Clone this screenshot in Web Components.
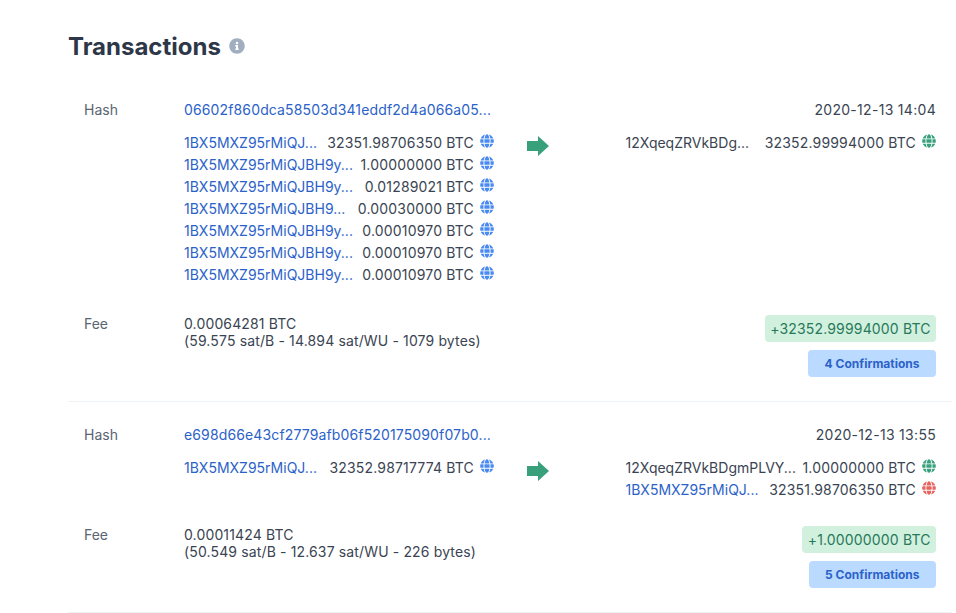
<!DOCTYPE html>
<html>
<head>
<meta charset="utf-8">
<title>Transactions</title>
<style>
  html, body { margin: 0; background: #fff; }
  body { font-family: Inter, "Liberation Sans", sans-serif; font-size: 14px; color: #3a4452; overflow: hidden; }
</style>
</head>
<body>
<tx-page>
  <tx-card style="--io-gap: 11px; --fee-gap: 29.4px">
    <a slot="hash">06602f860dca58503d341eddf2d4a066a05...</a>
    <span slot="time">2020-12-13 14:04</span>
    <io-line slot="in" addr="1BX5MXZ95rMiQJ..." amount="32351.98706350 BTC" link></io-line>
    <io-line slot="in" addr="1BX5MXZ95rMiQJBH9y..." amount="1.00000000 BTC" link></io-line>
    <io-line slot="in" addr="1BX5MXZ95rMiQJBH9y..." amount="0.01289021 BTC" link></io-line>
    <io-line slot="in" addr="1BX5MXZ95rMiQJBH9..." amount="0.00030000 BTC" link></io-line>
    <io-line slot="in" addr="1BX5MXZ95rMiQJBH9y..." amount="0.00010970 BTC" link></io-line>
    <io-line slot="in" addr="1BX5MXZ95rMiQJBH9y..." amount="0.00010970 BTC" link></io-line>
    <io-line slot="in" addr="1BX5MXZ95rMiQJBH9y..." amount="0.00010970 BTC" link></io-line>
    <io-line slot="out" addr="12XqeqZRVkBDg..." amount="32352.99994000 BTC" color="green"></io-line>
    <span slot="fee">0.00064281 BTC<br>(59.575 sat/B - 14.894 sat/WU - 1079 bytes)</span>
    <tx-badge slot="badge" kind="green">+32352.99994000 BTC</tx-badge>
    <tx-badge slot="badge" kind="blue">4 Confirmations</tx-badge>
  </tx-card>
  <tx-card style="--io-gap: 11px; --fee-gap: 24.4px">
    <a slot="hash">e698d66e43cf2779afb06f520175090f07b0...</a>
    <span slot="time">2020-12-13 13:55</span>
    <io-line slot="in" addr="1BX5MXZ95rMiQJ..." amount="32352.98717774 BTC" link></io-line>
    <io-line slot="out" addr="12XqeqZRVkBDgmPLVY..." amount="1.00000000 BTC" color="green"></io-line>
    <io-line slot="out" addr="1BX5MXZ95rMiQJ..." amount="32351.98706350 BTC" color="red" link></io-line>
    <span slot="fee">0.00011424 BTC<br>(50.549 sat/B - 12.637 sat/WU - 226 bytes)</span>
    <tx-badge slot="badge" kind="green">+1.00000000 BTC</tx-badge>
    <tx-badge slot="badge" kind="blue">5 Confirmations</tx-badge>
  </tx-card>
</tx-page>

<template id="tx-page-template">
  <style>
    :host { display: block; padding: 30px 4px 0 68px; }
    h1 { display: flex; align-items: center; gap: 8px; margin: 0 0 13px; font-size: 24px; line-height: 34px; font-weight: 700; color: #2d3748; }
    svg { width: 16px; height: 16px; margin-top: -2px; fill: #a0aec0; }
  </style>
  <h1>Transactions
    <svg viewBox="0 0 512 512"><path d="M256 8C119 8 8 119.1 8 256c0 137 111 248 248 248s248-111 248-248C504 119.1 393 8 256 8zm0 110c23.2 0 42 18.8 42 42s-18.8 42-42 42-42-18.8-42-42 18.8-42 42-42zm56 254c0 6.6-5.4 12-12 12h-88c-6.6 0-12-5.4-12-12v-24c0-6.6 5.4-12 12-12h12v-64h-12c-6.6 0-12-5.4-12-12v-24c0-6.6 5.4-12 12-12h64c6.6 0 12 5.4 12 12v100h12c6.6 0 12 5.4 12 12v24z"/></svg>
  </h1>
  <slot></slot>
</template>

<template id="tx-card-template">
  <style>
    :host { display: block; padding: 22px 16px 24px; border-bottom: 1px solid #edf2f7; }
    .head, .body, .foot { display: flex; }
    .head { line-height: 22px; }
    .label { width: 100px; flex: none; color: #5a6472; }
    .main { width: 310px; flex: none; }
    ::slotted(a) { color: #2b62c9; letter-spacing: .135px; }
    .time { margin-left: auto; letter-spacing: .3px; }
    .body { margin-top: var(--io-gap); }
    .body .spacer { width: 100px; flex: none; }
    .arrow { width: 22px; height: 20px; margin: 4px 0 0 33px; flex: none; }
    .out { width: 310.5px; margin-left: auto; }
    .foot { margin-top: var(--fee-gap); }
    .fee { line-height: 17px; letter-spacing: .14px; }
    .label.fee-label { line-height: 17px; }
    .badges { margin-left: auto; display: flex; flex-direction: column; align-items: flex-end; gap: 8px; }
  </style>
  <div class="head">
    <div class="label">Hash</div>
    <slot name="hash"></slot>
    <div class="time"><slot name="time"></slot></div>
  </div>
  <div class="body">
    <div class="spacer"></div>
    <div class="main"><slot name="in"></slot></div>
    <svg class="arrow" viewBox="0 0 22 20"><polygon points="0,5 11,5 11,0 22,10 11,20 11,15 0,15" fill="#38a17c"/></svg>
    <div class="out"><slot name="out"></slot></div>
  </div>
  <div class="foot">
    <div class="label fee-label">Fee</div>
    <div class="fee"><slot name="fee"></slot></div>
    <div class="badges"><slot name="badge"></slot></div>
  </div>
</template>

<template id="io-line-template">
  <style>
    :host { display: flex; justify-content: space-between; align-items: center; line-height: 22px; white-space: nowrap; }
    .addr.link { color: #2b62c9; }
    .right { display: flex; align-items: center; gap: 6px; }
    .amount { letter-spacing: .17px; }
    svg { width: 14px; height: 14px; margin-top: -5px; fill: var(--globe); }
  </style>
  <span class="addr"></span>
  <span class="right">
    <span class="amount"></span>
    <svg viewBox="0 0 496 512"><path d="M336.5 160C322 70.7 287.8 8 248 8s-74 62.7-88.5 152h177zM152 256c0 22.2 1.2 43.5 3.3 64h185.3c2.1-20.5 3.3-41.8 3.3-64s-1.2-43.5-3.3-64H155.3c-2.1 20.5-3.3 41.8-3.3 64zm324.7-96c-28.6-67.9-86.5-120.4-158-141.6 24.4 33.8 41.2 84.7 50 141.6h108zM177.2 18.4C105.8 39.6 47.8 92.1 19.3 160h108c8.7-56.9 25.5-107.8 49.9-141.6zM487.4 192H372.7c2.1 21 3.3 42.5 3.3 64s-1.2 43-3.3 64h114.6c5.5-20.5 8.6-41.8 8.6-64s-3.1-43.5-8.5-64zM120 256c0-21.5 1.2-43 3.3-64H8.6C3.2 212.5 0 233.8 0 256s3.2 43.5 8.6 64h114.6c-2-21-3.2-42.5-3.2-64zm39.5 96c14.5 89.3 48.7 152 88.5 152s74-62.7 88.5-152h-177zm159.3 141.6c71.4-21.2 129.4-73.7 158-141.6h-108c-8.8 56.9-25.6 107.8-50 141.6zM19.3 352c28.6 67.9 86.5 120.4 158 141.6-24.4-33.8-41.2-84.7-50-141.6h-108z"/></svg>
  </span>
</template>

<template id="tx-badge-template">
  <style>
    :host { display: block; height: 27px; line-height: 27px; padding: 0 5.3px; border-radius: 4px; white-space: nowrap; letter-spacing: .17px; }
    :host([kind="green"]) { background: #d1f0de; color: #27795a; }
    :host([kind="blue"]) { background: #bbdaff; color: #2b62c9; font-size: 12px; font-weight: 700; padding: 0 16.5px; letter-spacing: 0; }
  </style>
  <slot></slot>
</template>

<script>
  const GLOBES = { blue: '#4a8af0', green: '#38a17c', red: '#e5635f' };

  class TemplateElement extends HTMLElement {
    constructor() {
      super();
      const template = document.getElementById(this.constructor.templateId);
      this.attachShadow({ mode: 'open' }).appendChild(template.content.cloneNode(true));
    }
  }

  class TxPage extends TemplateElement {
    static templateId = 'tx-page-template';
  }

  class TxCard extends TemplateElement {
    static templateId = 'tx-card-template';
  }

  class TxBadge extends TemplateElement {
    static templateId = 'tx-badge-template';
  }

  class IoLine extends TemplateElement {
    static templateId = 'io-line-template';

    connectedCallback() {
      const addr = this.shadowRoot.querySelector('.addr');
      addr.textContent = this.getAttribute('addr');
      addr.classList.toggle('link', this.hasAttribute('link'));
      this.shadowRoot.querySelector('.amount').textContent = this.getAttribute('amount');
      this.style.setProperty('--globe', GLOBES[this.getAttribute('color') || 'blue']);
    }
  }

  customElements.define('tx-page', TxPage);
  customElements.define('tx-card', TxCard);
  customElements.define('tx-badge', TxBadge);
  customElements.define('io-line', IoLine);
</script>
</body>
</html>
